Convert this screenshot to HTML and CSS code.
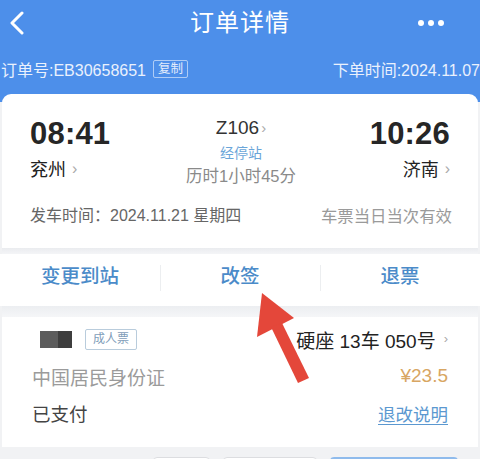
FILE: index.html
```html
<!DOCTYPE html>
<html lang="zh-CN">
<head>
<meta charset="utf-8">
<title>订单详情</title>
<link rel="stylesheet" href="styles.css">
</head>
<body>
<div class="page">
  <header class="header">
    <div class="topbar">
      <svg class="back" width="16" height="24" viewBox="0 0 16 24"><path d="M13 2 L3 12 L13 22" fill="none" stroke="#fff" stroke-width="3" stroke-linecap="round" stroke-linejoin="round"/></svg>
      <div class="title">订单详情</div>
      <div class="dots"><span></span><span></span><span></span></div>
    </div>
    <div class="orderline">
      <div class="orderno">订单号:EB30658651<span class="copy">复制</span></div>
      <div class="ordertime">下单时间:2024.11.07</div>
    </div>
  </header>
  <main class="main">
    <section class="card trip">
      <div class="route">
        <div class="end">
          <div class="time">08:41</div>
          <div class="station">兖州<span class="chev">›</span></div>
        </div>
        <div class="mid">
          <div class="train">Z106<span class="chev">›</span></div>
          <div class="stops">经停站</div>
          <div class="dur">历时1小时45分</div>
        </div>
        <div class="end end-right">
          <div class="time">10:26</div>
          <div class="station">济南<span class="chev">›</span></div>
        </div>
      </div>
      <div class="daterow">
        <div class="date">发车时间：2024.11.21 星期四</div>
        <div class="valid">车票当日当次有效</div>
      </div>
    </section>
    <div class="gap gap-a"></div>
    <section class="card actions">
      <div class="act">变更到站</div>
      <div class="act act-div">改签</div>
      <div class="act act-div">退票</div>
    </section>
    <div class="gap gap-b"></div>
    <section class="card passenger">
      <div class="prow">
        <div class="pname"><span class="namebox"></span><span class="tag">成人票</span></div>
        <div class="seat">硬座 13车 050号<span class="chev small">›</span></div>
      </div>
      <div class="prow">
        <div class="idtype">中国居民身份证</div>
        <div class="price">¥23.5</div>
      </div>
      <div class="prow">
        <div class="paid">已支付</div>
        <div class="rules">退改说明</div>
      </div>
    </section>
    <div class="bottombar">
      <span class="btn btn-a"></span>
      <span class="btn btn-b"></span>
      <span class="btn btn-c"></span>
    </div>
  </main>
  <svg class="arrow" width="480" height="459" viewBox="0 0 480 459">
    <polygon points="262,293 257,337 294,318" fill="#e4473a"/>
    <polygon points="271,327 282,323 309,378 298,383" fill="#e4473a"/>
  </svg>
</div>
</body>
</html>
```

FILE: styles.css
```css
* { box-sizing: border-box; margin: 0; padding: 0; }
html, body { width: 480px; height: 459px; overflow: hidden; }
body {
  background: #f1f2f4;
  font-family: "Liberation Sans", "Noto Sans CJK SC", sans-serif;
  color: #222;
}
.page { position: relative; width: 480px; height: 459px; overflow: hidden; }

.header { background: #4d8fea; height: 94px; color: #fff; }
.topbar {
  height: 47px;
  display: flex;
  align-items: center;
  justify-content: space-between;
  padding: 0 36px 0 9px;
  position: relative;
}
.back { display: block; margin-top: -1px; }
.title {
  position: absolute;
  left: 0; right: 0; top: 9px;
  text-align: center;
  font-size: 24px;
  line-height: 28px;
  letter-spacing: 1px;
}
.dots { display: flex; gap: 4px; margin-top: -2px; }
.dots span { width: 6px; height: 6px; border-radius: 50%; background: #fff; display: block; }

.orderline {
  display: flex;
  justify-content: space-between;
  align-items: center;
  height: 24px;
  margin-top: 10px;
  font-size: 16px;
  color: #eaf1fd;
}
.orderno { display: flex; align-items: center; padding-left: 1px; }
.copy {
  margin-left: 7px;
  border: 1px solid rgba(255,255,255,0.55);
  border-radius: 2px;
  font-size: 12.5px;
  line-height: 16px;
  padding: 0 4px;
  color: #e3ecfb;
}
.ordertime { padding-right: 0; white-space: nowrap; }

.main {
  background: linear-gradient(#4d8fea 0, #4d8fea 8px, #f1f2f4 8px);
}
.card { background: #fff; margin: 0 2px; }
.trip { border-radius: 9px 9px 0 0; padding: 22px 28px 20px 28px; }
.route { display: grid; grid-template-columns: 1fr auto 1fr; }
.end { display: flex; flex-direction: column; }
.end-right { align-items: flex-end; }
.time { font-size: 31px; font-weight: bold; line-height: 36px; color: #262626; letter-spacing: 0.2px; }
.station { font-size: 18px; line-height: 24px; margin-top: 6px; color: #222; display: flex; align-items: center; }
.chev { color: #aaa; font-size: 16px; margin-left: 6px; line-height: 1; position: relative; top: -1px; }
.chev.small { font-size: 13px; margin-left: 8px; }
.mid { display: flex; flex-direction: column; align-items: center; padding-left: 2px; }
.train { font-size: 19px; line-height: 24px; color: #333; display: flex; align-items: center; }
.train .chev { margin-left: 2px; font-size: 15px; }
.stops { font-size: 14px; line-height: 20px; color: #6aa5d9; margin-top: 3px; }
.dur { font-size: 16.5px; line-height: 24px; color: #8a8a8a; margin-top: 1px; }

.daterow { display: flex; justify-content: space-between; margin-top: 16px; line-height: 24px; }
.date { font-size: 16px; color: #666; }
.valid { font-size: 16.4px; color: #9a9a9a; margin-right: -2px; }

.gap { margin: 0 2px; }
.gap-a { height: 6px; background: linear-gradient(#eaecef, #f4f5f7); }
.gap-b { height: 11px; background: linear-gradient(#eceef1, #f5f6f8); }

.actions { display: grid; grid-template-columns: 1fr 1fr 1fr; padding: 10px 0 18px; margin: 0; }
.act {
  text-align: center;
  font-size: 19.5px;
  line-height: 24px;
  color: #4b8bc9;
  font-weight: 500;
  position: relative;
}
.act-div::before {
  content: "";
  position: absolute;
  left: 0; top: 1px; bottom: -3px;
  width: 1px;
  background: #eceef0;
}

.passenger { padding: 10px 30px 22px 30px; }
.prow { display: flex; justify-content: space-between; align-items: center; height: 24px; }
.prow + .prow { margin-top: 13px; }
.pname { display: flex; align-items: center; padding-left: 8px; }
.namebox {
  width: 32px; height: 17px;
  background: linear-gradient(90deg, #5c5c5c 0, #5c5c5c 55%, #3e3e3e 55%);
  display: block;
}
.tag {
  margin-left: 13px;
  border: 1px solid #b9ccdc;
  border-radius: 2px;
  font-size: 12px;
  line-height: 19px;
  padding: 0 7px;
  color: #7f9db9;
}
.seat { font-size: 19px; color: #222; display: flex; align-items: center; }
.idtype { font-size: 19px; color: #9b9b9b; }
.price { font-size: 19px; color: #d8a663; }
.paid { font-size: 18.5px; color: #444; }
.rules { font-size: 17.5px; color: #5b98d0; text-decoration: underline; text-underline-offset: 3px; }

.bottombar { display: flex; justify-content: flex-end; gap: 13px; padding: 10px 22px 0 0; height: 40px; }
.btn { display: block; height: 24px; border-radius: 4px; background: #fff; border: 1px solid #dcdde0; }
.btn-a { width: 57px; }
.btn-b { width: 94px; }
.btn-c { width: 128px; border-color: #8fbbec; border-width: 2px; }

.arrow { position: absolute; left: 0; top: 0; pointer-events: none; }
```
